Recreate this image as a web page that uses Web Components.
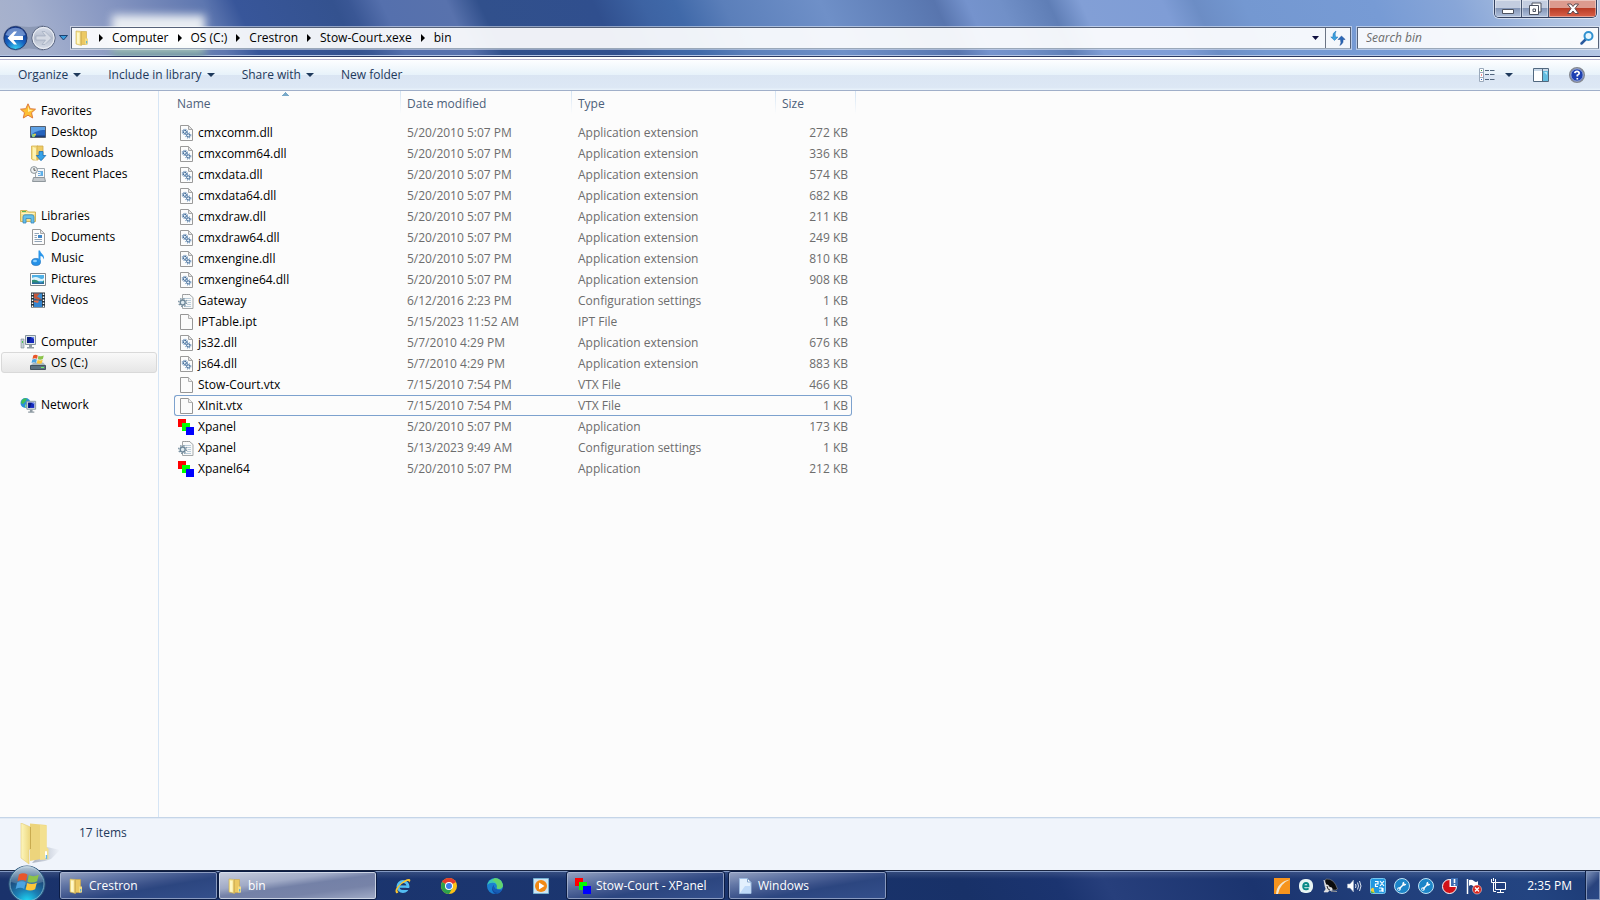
<!DOCTYPE html>
<html lang="en">
<head>
<meta charset="utf-8">
<title>bin</title>
<style>
  html, body{
    height: 100%;
    margin: 0;
  }
  body{
    font: 12px/20px "Open Sans", "Noto Sans", sans-serif;
    color: #000;
    background: #fcfcfc;
    overflow: hidden;
  }
</style>
</head>
<body>
<explorer-window>
  <title-bar slot="title"></title-bar>
  <tool-bar slot="toolbar"></tool-bar>
  <nav-pane slot="nav">
    <nav-item icon="star" root>Favorites</nav-item>
    <nav-item icon="desktop">Desktop</nav-item>
    <nav-item icon="downloads">Downloads</nav-item>
    <nav-item icon="recent" last>Recent Places</nav-item>
    <nav-item icon="libraries" root>Libraries</nav-item>
    <nav-item icon="documents">Documents</nav-item>
    <nav-item icon="music">Music</nav-item>
    <nav-item icon="pictures">Pictures</nav-item>
    <nav-item icon="videos" last>Videos</nav-item>
    <nav-item icon="computer" root>Computer</nav-item>
    <nav-item icon="drive" selected last>OS (C:)</nav-item>
    <nav-item icon="network" root>Network</nav-item>
  </nav-pane>
  <file-list slot="files"></file-list>
  <details-pane slot="details">17 items</details-pane>
  <task-bar slot="taskbar">
    <task-button slot="group" icon="folder">Crestron</task-button>
    <task-button slot="group" icon="folder" active>bin</task-button>
    <task-button slot="windows" icon="xpanel">Stow-Court - XPanel</task-button>
    <task-button slot="windows" icon="page">Windows</task-button>
  </task-bar>
</explorer-window>

<script>
const flag = `
  <path d="M1 3.2C3 2 5 2 7 3.2L6 7.8C4.200 6.800 2.200 6.800 0 7.900z" fill="#e8562a"/>
  <path d="M8 3.600C10 4.700 12.500 4.700 15 3.400L13.800 8C11.500 9.200 9 9 7 8.200z" fill="#8cc34a"/>
  <path d="M-.2 8.800C2 7.700 4 7.700 5.800 8.800L4.700 13.300C3 12.200 1 12.200-1.300 13.300z" fill="#4aa3e0"/>
  <path d="M6.800 9.200C9 10.100 11.300 10.100 13.600 9L12.400 13.500C10 14.700 7.600 14.500 5.700 13.700z" fill="#fcc63a"/>`

const sheet = `
  <path d="M2.500.5H10.500L14.500 4.500V15.500H2.500z" fill="#fcfcfc" stroke="#9a9a9a"/>
  <path d="M10.500.5V4.500H14.500z" fill="#e4e4e4" stroke="#a8a8a8"/>`

const wrench = `
  <circle cx="8" cy="8" r="7.500" fill="#1c85c8" stroke="#bfe2f5"/>
  <path d="M5 11L10 6" stroke="#fff" stroke-width="1.500" stroke-linecap="round"/>
  <path d="M12.300 5.500A2 2 0 1 1 10.500 3.700L9.800 5.200L10.800 6.200z" fill="#fff"/>
  <circle cx="5" cy="11" r="1.800" fill="#fff"/><circle cx="4.700" cy="11.300" r=".8" fill="#1c85c8"/>`

const monitor = `
  <path d="M5.500 1.500H15.500V10.500H5.500z" fill="#dfe6ea" stroke="#84939c"/>
  <path d="M7 3H14V9H7z" fill="#1529bd"/><path d="M7 3H11L9 9H7z" fill="#071a82"/><path d="M11 3H14V5z" fill="#6b8cf0"/>
  <path d="M9 11H12V13H14V14.500H7V13H9z" fill="#8f9ba3"/>`

const ICONS = {
  star: `<path d="M8 .8L10.200 5.700L15.500 6.200L11.500 9.700L12.700 15L8 12.200L3.300 15L4.500 9.700L.5 6.200L5.800 5.700z" fill="#fdbf33" stroke="#df7a3c"/>
    <path d="M8 3L9.300 6.700L13 7L8 9z" fill="#fff3a8"/>`,
  desktop: `<path d="M.5 2.500H15.500V13.500H.5z" fill="#2563bd" stroke="#56606e"/><path d="M1 3H15V6C9 6 4 8 1 11z" fill="#5fa2e6"/>
    <path d="M1 11.500H15V13H1z" fill="#1d3d77"/><circle cx="3.500" cy="11.500" r="1.800" fill="#8ed07e"/><circle cx="5" cy="10.500" r="1" fill="#f6c744"/>`,
  downloads: `<path d="M1.500 1H8V15H3L1.500 14z" fill="#f5df85" stroke="#d5b04e" stroke-width=".8"/><path d="M7 1H13V14H7z" fill="#eecb66" stroke="#d0aa49" stroke-width=".8"/>
    <path d="M3 2L6 3.500V15L3 14z" fill="#fff3b3"/>
    <path d="M9 6.500H13V10.500H15.800L11 15.700L6.300 10.500H9z" fill="#36a2e8" stroke="#1e6fb5" stroke-width=".8"/>`,
  recent: `<path d="M5.500 2.500H14.500V12H5.500z" fill="#f5f8fa" stroke="#a0a8ae"/><path d="M8 5.500H13M8 7.500H10M8 9.500H13" stroke="#6fa8d8"/>
    <path d="M10.500 6H13V9H10.500z" fill="#58b1ec"/><path d="M3.500 11.500H14.500L15.500 15.500H2.500z" fill="#c3c8cc" stroke="#8f979c"/>
    <circle cx="4" cy="4" r="3.400" fill="#edf0f1" stroke="#8b9499"/><path d="M4 2V4.300H5.700" stroke="#555" fill="none"/>`,
  libraries: `<path d="M.5 2.500H7L8.500 4H15.500V13.500H.5z" fill="#f5df8c" stroke="#d3b55c"/><path d="M2 3.500H6" stroke="#5db555"/>
    <path d="M1.500 5.500H14.500" stroke="#fff6c4"/>
    <path d="M3 15V9Q3 6.800 5 6.800H12Q14 6.800 14 9V15H11V10.500H6V15z" fill="#66bfe9" stroke="#3687ba" stroke-width=".8"/>`,
  documents: `${sheet}<path d="M4.500 4.500H9M4.500 6.500H7M4.500 8.500H7M4.500 10.500H12M4.500 12.500H12" stroke="#92a5b8"/><path d="M8 6H12V9H8z" fill="#3f86c7"/>`,
  music: `<ellipse cx="6" cy="12" rx="4.500" ry="3.600" fill="#2590e6" stroke="#1769b5" stroke-width=".6"/>
    <path d="M8.500 12V.5H10C10.500 3.500 14.500 4 14 9.500C13 7 12 6 10.500 6V12z" fill="#2a96ea"/><ellipse cx="5" cy="11" rx="2" ry="1.200" fill="#8dd0ff"/>`,
  pictures: `<path d="M.5 2.500H15.500V14.500H.5z" fill="#fdfdfd" stroke="#7f868b"/><path d="M2 4H14V13H2z" fill="#4fb0e6"/>
    <path d="M2 7Q6 5 9 7T14 7V10H2z" fill="#dcf3fa"/><path d="M2 9Q7 8 9 11T14 9V13H2z" fill="#2f8f78"/><path d="M2 11.500H14V13H2z" fill="#2b6ba0"/>`,
  videos: `<path d="M1 .5H15V15.500H1z" fill="#24303a"/><path d="M4 1.500H12V7.500H4z" fill="#3c8fd4"/><path d="M4 8.500H12V15H4z" fill="#3385d0"/>
    <path d="M4 1.500H10L7 4.500L12 7.500H7L4 6z" fill="#c4573a"/><path d="M4 8.500H9L8 11L4 10z" fill="#e06f4a"/>
    <path d="M2.500 1.500V15M13.500 1.500V15" stroke="#fff" stroke-width="1.500" stroke-dasharray="1.500 1.500"/>`,
  computer: `${monitor}<path d="M1 5H4V14H1z" fill="#c4cfd4" stroke="#7d8c94" stroke-width=".6"/><path d="M2 7H3V9H2z" fill="#4cc84f"/>`,
  drive: `<path d="M1 10L3.500 7.500H13L15.500 10V14.500H1z" fill="#a8b7bf"/><path d="M.5 10.500H15.500V14.500H.5z" fill="#5d7280" stroke="#45555f"/>
    <path d="M11 12H14V13H11z" fill="#6cf06c"/><g transform="translate(2.500 -2) scale(.75)">${flag}</g>`,
  network: `<circle cx="5.500" cy="6" r="5" fill="#2b8fd8"/><path d="M2 3Q5 0 7 2L5 5L3 7L1 6z" fill="#3fbf55"/><path d="M5 7L7 9L5 11z" fill="#7be08a"/>
    <g transform="translate(2 3) scale(.88)">${monitor}</g>`,
  folder: `<path d="M2 1L7.500 1.500V15.500L2 14z" fill="#f7e594" stroke="#cfae4d" stroke-width=".6"/><path d="M7.500 1.500H12.500V14.500H7.500z" fill="#ecc963" stroke="#cfa847" stroke-width=".6"/>
    <path d="M3 2.500L5.500 3V14L3 13.500z" fill="#fff8c8"/><path d="M6.800 2V15" stroke="#d9b85c"/><path d="M11 8.500H14V14.500H11z" fill="#f3dd86"/><path d="M12.700 11V13.500" stroke="#4ba7e0"/>`,
  dll: `${sheet}<g fill="none" stroke="#7196bd" stroke-dasharray="1 1.100" stroke-width="1.200"><circle cx="6.800" cy="6.800" r="2.600"/><circle cx="10.200" cy="10.400" r="2.600"/></g>
    <g fill="#e6f0fa" stroke="#3c6795"><circle cx="6.800" cy="6.800" r="1.600"/><circle cx="10.200" cy="10.400" r="1.600"/></g>`,
  ini: `<path d="M4.500 1.500H11.500L15 4.500V15.500H4.500z" fill="#f8f9f9" stroke="#a4a8aa"/><path d="M5 1.500H12" stroke="#999" stroke-dasharray="1 1"/>
    <path d="M6 5.500H13M9 7.500H13M10 9.500H13M9 11.500H13M6 13.500H13" stroke="#b9cbd8"/>
    <circle cx="4.700" cy="9.500" r="2.500" fill="#dfeaf0" stroke="#6d8799" stroke-width="1.400"/><circle cx="4.700" cy="9.500" r="4" fill="none" stroke="#6d8799" stroke-width="1.200" stroke-dasharray="1.400 1.740"/>`,
  file: `<path d="M2.500.5H10.500L14.500 4.500V15.500H2.500z" fill="#fbfbfb" stroke="#969696"/><path d="M10.500.5V4.500H14.500" fill="#eee" stroke="#b0b0b0"/>`,
  xpanel: `<path d="M0 0H8V8H0z" fill="#f00"/><path d="M4 4H12V12H4z" fill="#0f0"/><path d="M8 8H16V16H8z" fill="#00f"/>`,
  page: `<path d="M2.500.5H10.500L14 4V15.500H2.500z" fill="#e3f0fd" stroke="#9dbbe0"/><path d="M8 8H13.500V15H3z" fill="#c0daf8"/><path d="M10.500.5V4H14z" fill="#fff" stroke="#89a9cf"/>`,
  refresh: `<path d="M6 1Q2 3 3 7H.8L4.500 10.500L8 7H5.500Q4.500 4 6 1z" fill="#3aa0de" stroke="#2370b5" stroke-width=".5"/><path d="M10 15.500Q14 13 13 9.500H15.200L11.500 6L8 9.500H10.500Q11.500 12.500 10 15.500z" fill="#2a68b8" stroke="#204c92" stroke-width=".5"/>`,
  magnifier: `<path d="M2.500 13.500L7 9" stroke="#28599e" stroke-width="2.500" stroke-linecap="round"/><circle cx="9.500" cy="6" r="4" fill="#e8f7ff" stroke="#3191d0" stroke-width="2"/>`,
  views: `<path d="M.5 1.500H4.500V14.500H.5zM.5 5.500H4.500M.5 10.500H4.500" fill="#fff" stroke="#9aa9bb"/><path d="M2 3H3V4H2z" fill="#3a9b40"/><path d="M2 7.500H3V8.500H2z" fill="#e02020"/><path d="M2 12H3V13H2z" fill="#2268d0"/>
    <path d="M6 3.500H10M11 3.500H15.500M6 7.500H10M11 7.500H15.500M6 12.500H10M11 12.500H15.500" stroke="#52677e"/>`,
  preview: `<path d="M.5 1.500H15.500V14.500H.5z" fill="#fff" stroke="#51687f"/><path d="M1 2H15V4H1z" fill="#c9d9e9"/><path d="M10 4H15V14H10z" fill="#64bde0"/><path d="M9.500 2V14.500" stroke="#51687f"/><path d="M11 5L14 8V5z" fill="#b9e7f7"/>`,
  help: `<circle cx="8" cy="8" r="7.300" fill="#1b3fb2" stroke="#85898f" stroke-width="1.400"/><circle cx="8" cy="8" r="6.200" fill="none" stroke="#ccd2dd" stroke-width=".8"/>
    <path d="M5.800 6.200Q6 4.300 8 4.300T10.200 6.200Q10.200 7.300 8.300 8.300V9.500M8.300 11V12.500" fill="none" stroke="#fff" stroke-width="1.700"/>`,
  ie: `<circle cx="8" cy="8.500" r="5" fill="none" stroke="#53bdf2" stroke-width="3"/><path d="M4 8.600H13" stroke="#53bdf2" stroke-width="2.400"/><path d="M9 10H15V12H9z" fill="#1c356f"/>
    <path d="M1 15Q-1.500 12 5 6T15 1.200Q16 2 14.500 4.500Q14.700 2.500 12 3Q7 5 4 9T3.500 14Q2 16 1 15z" fill="#fbc42e"/>`,
  chrome: `<circle cx="8" cy="8" r="8" fill="#fbc116"/><path d="M8 8L1.100 4A8 8 0 0 1 14.900 4z" fill="#e33b2e"/><path d="M8 8L1.100 4A8 8 0 0 0 8 16L11.500 10z" fill="#2da24c"/>
    <circle cx="8" cy="8" r="4" fill="#fff"/><circle cx="8" cy="8" r="3" fill="#3b7ded"/>`,
  edge: `<circle cx="8" cy="8" r="8" fill="#1b7fd0"/><path d="M.2 7A8 8 0 0 1 15.900 7Q16 11 11.500 11Q9 10.500 10 9Q10.500 6 7.500 5Q3 4 .2 7z" fill="#3dc7b0"/>
    <path d="M8 0A8 8 0 0 1 15.900 7Q16 11 11.500 11Q9 10.500 10 9Q10 4 5 2z" fill="#63d36e"/><path d="M6.500 7Q3 12 8 16A8 8 0 0 0 14.500 12Q7 13 6.500 7z" fill="#12479e"/><path d="M7 7Q6 12 13 12Q16 11 14 13.500L12 15Q3 14 7 7z" fill="#175db5"/>`,
  player: `<path d="M.5.500H15.500V15.500H.5z" fill="#cfe5f2" stroke="#75b1d3"/><circle cx="8" cy="8" r="6" fill="#f28913"/><path d="M6 4.500L11.500 8L6 11.500z" fill="#fff"/>`,
  orange: `<path d="M0 0H16V16H0z" fill="#f7941d"/><path d="M2 16Q3 4 16 1.500Q6 5.500 4 16z" fill="#f2e6cf"/>`,
  eset: `<rect x="1" y="1" width="14" height="14" rx="6" fill="#e8f5f4"/><path d="M5.300 8.300H10.500Q10.500 5 8 5T5.200 8.200T8.200 11.300Q9.700 11.300 10.500 10.400" fill="none" stroke="#078a87" stroke-width="1.900"/>`,
  dish: `<path d="M4 1Q12 0 15.500 11Q12 14 6 9Q1 4 4 1z" fill="#0c0c0c" stroke="#8a8a8a" stroke-width=".6"/><path d="M2 2L4 7L6 7L7 9L10 10L10 13L7 12L6 14H2L4 11L3 8z" fill="#ddd" stroke="#f2f2f2" stroke-width=".6"/><path d="M5 8L6 11L8 12" stroke="#333"/><path d="M9 13L15 13.500" stroke="#999"/>`,
  speaker: `<path d="M1.500 6H4L7.500 2V14L4 10H1.500z" fill="#fff" stroke="#a4b2ca" stroke-width=".6"/><path d="M9.500 6Q10.500 8 9.500 10M11.500 4.500Q13.500 8 11.500 11.500M13.500 3Q16.500 8 13.500 13" fill="none" stroke="#dbe4f0"/>`,
  tiles: `<rect x=".5" y=".5" width="15" height="15" rx="2" fill="#2097e0" stroke="#78c6ee"/><path d="M5 3.500H8V6H5.500V8.500H8M10 3L14 8M14 3L10 8M9 10H12V13H9M13 10V14" fill="none" stroke="#fff" stroke-width="1.200"/>
    <path d="M1 11Q4 8 4 12T8 15H1z" fill="#f6ce38"/><path d="M1 13L5 15H1z" fill="#4fb84f"/>`,
  wrench,
  pie: `<circle cx="7.500" cy="8.500" r="7" fill="#d01218" stroke="#fff"/><path d="M7.500 1V9H14.500V1z" fill="#fff"/><path d="M9 0H16V8H9z" fill="#3c6eb3"/><path d="M12.500 1V5M12.500 6V7.500" stroke="#fff" stroke-width="1.600"/>`,
  action: `<path d="M1.500 1V16" stroke="#fff" stroke-width="1.500"/><path d="M3 2Q6 1 8 3T12 3V9Q9 10 7 8T3 8z" fill="#fff"/><circle cx="11" cy="11.500" r="4.500" fill="#d9261c" stroke="#fff" stroke-width=".5"/><path d="M9 9.500L13 13.500M13 9.500L9 13.500" stroke="#fff" stroke-width="1.400"/>`,
  lan: `<path d="M5.500 4.500H15.500V11.500H5.500z" fill="#203f7c" stroke="#fff"/><path d="M7 14.500H14M10.500 12V14" stroke="#fff"/><path d="M1.500 1V4.500H5.500V1M3.500 4.500V13.500H6M3.500 0V3" fill="none" stroke="#fff"/>`,
}

class AeroIcon extends HTMLElement{
  connectedCallback(){
    if (!this.shadowRoot) this.attachShadow({mode: 'open'})
    this.shadowRoot.innerHTML = `
      <style>
        :host{
          display: block;
          flex: none;
          width: 16px;
          height: 16px;
        }
        svg{
          display: block;
          width: 100%;
          height: 100%;
          overflow: visible;
        }
      </style>
      <svg viewBox="0 0 16 16" fill="none" aria-hidden="true">${ICONS[this.getAttribute('name')] || ''}</svg>
    `
  }
}
customElements.define('aero-icon', AeroIcon)

class ExplorerWindow extends HTMLElement{
  constructor(){
    super()
    this.attachShadow({mode: 'open'}).innerHTML = `
      <style>
        :host{
          display: flex;
          flex-direction: column;
          height: 100vh;
        }
        .body{
          display: flex;
          flex: 1;
          min-height: 0;
        }
        ::slotted([slot=nav]){
          flex: none;
        }
        ::slotted([slot=files]){
          flex: 1;
          min-width: 0;
        }
      </style>
      <slot name="title"></slot>
      <slot name="toolbar"></slot>
      <div class="body">
        <slot name="nav"></slot>
        <slot name="files"></slot>
      </div>
      <slot name="details"></slot>
      <slot name="taskbar"></slot>
    `
  }
}
customElements.define('explorer-window', ExplorerWindow)

class TitleBar extends HTMLElement{
  constructor(){
    super()
    const crumbs = ['Computer', 'OS (C:)', 'Crestron', 'Stow-Court.xexe', 'bin']
    this.attachShadow({mode: 'open'}).innerHTML = `
      <style>
        :host{
          display: flex;
          flex-direction: column;
          position: relative;
          box-sizing: border-box;
          height: 57px;
          overflow: hidden;
          border-bottom: 1px solid #2a3860;
          box-shadow: inset 0 -1px #b5c6e6;
          background: linear-gradient(65deg, #a9b3cc 0, #a3afcd 3%, #8797c2 8%, #6c81b5 12%, #5e77b0 14%, #38569a 16%, #34528f 22%,
            #3a5795 23%, #5570ad 25%, #5872ad 29%, #31508c 31%, #304f8e 38%, #3d63a3 41%, #4069a9 43%, #5b7fba 46%, #6f90c8 52%, #5e7db6 57%,
            #5875ae 59%, #7593cd 61%, #7190c8 63%, #5f7eb6 66%, #829fd6 68%, #7f9dd6 73%, #6c8dc5 75%, #7498d1 78%, #779bd5 86%, #88a6d8 91%, #aabfe0 96%, #b9cae6 100%);
        }
        .glow{
          position: absolute;
          left: 112px;
          top: 15px;
          width: 93px;
          height: 42px;
          background: linear-gradient(#e9edf2 70%, #78a09d 85%);
          filter: blur(4px);
        }
        button{
          display: flex;
          align-items: center;
          justify-content: center;
          margin: 0;
          padding: 0;
          border: 0;
          background: none;
          font: inherit;
          color: inherit;
        }
        svg{
          display: block;
        }
        .controls{
          display: flex;
          position: relative;
          align-self: flex-end;
          box-sizing: border-box;
          height: 18px;
          margin-right: 3px;
          border: 1px solid #34415f;
          border-top: 0;
          border-radius: 0 0 5px 5px;
          box-shadow: 0 0 0 1px #ffffff88;
          overflow: hidden;
        }
        .controls button{
          width: 27px;
          border-right: 1px solid #45546f;
          background: linear-gradient(#c3cde0 45%, #8496b7 50%, #b1c1dc);
          box-shadow: inset 0 0 0 1px #ffffff66;
        }
        .controls button.close{
          width: 47px;
          border-right: 0;
          background: linear-gradient(#dc9a8e 45%, #b93c26 50%, #d9624a);
        }
        .bar{
          display: flex;
          align-items: center;
          position: relative;
          margin-top: 6px;
          height: 28px;
          padding: 0 1px 0 2px;
        }
        .travel{
          display: flex;
          align-items: center;
          width: 69px;
        }
        .address, .search{
          display: flex;
          align-items: stretch;
          box-sizing: border-box;
          height: 22px;
          border: 1px solid #566279;
          border-bottom-color: #9aa8b9;
          background: #ffffffea;
          box-shadow: 0 0 0 1px #ffffff77;
        }
        .address{
          flex: 1;
          min-width: 0;
        }
        .address aero-icon{
          margin: 2px 0 0 2px;
        }
        .crumb::before{
          content: "";
          border: 4px solid transparent;
          border-left: 4px solid #000;
          border-right: 0;
          margin: 0 9px;
        }
        .drop{
          width: 20px;
          margin-left: auto;
        }
        .reload{
          width: 25px;
          border-left: 1px solid #6b7485;
        }
        .address .reload aero-icon{
          margin: 0;
        }
        .search{
          align-items: center;
          width: 242px;
          margin-left: 6px;
          padding: 0 3px 0 8px;
        }
        input{
          flex: 1;
          min-width: 0;
          padding: 0;
          border: 0;
          outline: 0;
          background: none;
          font: inherit;
          font-style: italic;
        }
        input::placeholder{
          color: #6d6d6d;
          opacity: 1;
        }
      </style>
      <div class="glow"></div>
      <div class="controls">
        <button aria-label="Minimize"><svg width="14" height="14"><path d="M1.500 7.500H12.500V11.500H1.500z" fill="#fff" stroke="#4d5361"/></svg></button>
        <button aria-label="Restore"><svg width="14" height="14"><path d="M4 1H13V10H4z" fill="#fff" stroke="#4d5361"/><path d="M1.500 3.500H10.500V12.500H1.500zM5 7V9.500H7.500V7z" fill="#fff" fill-rule="evenodd" stroke="#4d5361"/></svg></button>
        <button class="close" aria-label="Close"><svg width="14" height="14"><path d="M1.500 2H5L7 4.500L9 2H12.500L9 6.500L12.500 11.500H9L7 9L5 11.500H1.500L5 6.500z" fill="#fff" stroke="#5d4a50"/></svg></button>
      </div>
      <div class="bar">
        <div class="travel">
          <button aria-label="Back and forward"><svg width="54" height="28" viewBox="0 0 54 28">
            <defs>
              <radialGradient id="b" cx=".5" cy="1" r=".9"><stop offset="0" stop-color="#35d5f5"/><stop offset=".5" stop-color="#1762c0"/><stop offset="1" stop-color="#12358c"/></radialGradient>
              <linearGradient id="f" x2="0" y2="1"><stop offset="0" stop-color="#d9dfeb"/><stop offset=".5" stop-color="#b5bdcd"/><stop offset="1" stop-color="#d8dee9"/></linearGradient>
            </defs>
            <path d="M13 1Q27 5 41 1V27Q27 22 13 27z" fill="#8c99b5"/>
            <circle cx="13.500" cy="14" r="12.500" fill="#8b98b4"/><circle cx="13.500" cy="14" r="11.500" fill="url(#b)" stroke="#223a70"/>
            <path d="M3.500 11A10.500 10.500 0 0 1 23.500 11Q13 15 3.500 11z" fill="#a2c0ec" opacity=".6"/>
            <path d="M5.500 14L12 7.500H15L11.500 12H21V16H11.500L15 20.500H12z" fill="#fff"/>
            <circle cx="41.500" cy="14" r="11.700" fill="url(#f)" stroke="#5c6883"/><circle cx="41.500" cy="14" r="10.500" fill="none" stroke="#eef1f7"/>
            <path d="M49.500 14L43 7.500H40L43.500 12H34V16H43.500L40 20.500H43z" fill="#d5dae4" stroke="#9ba6ba" stroke-width=".6"/>
          </svg></button>
          <button aria-label="Recent pages"><svg width="14" height="8"><path d="M3.500 1.500H11.500L7.500 6z" fill="#3b9bdb" stroke="#1c4373"/></svg></button>
        </div>
        <div class="address">
          <aero-icon name="folder"></aero-icon>
          ${crumbs.map(item => `<button class="crumb">${item}</button>`).join('')}
          <button class="drop" aria-label="Previous locations"><svg width="7" height="4"><path d="M0 0H7L3.500 4z" fill="#101040"/></svg></button>
          <button class="reload" aria-label="Refresh"><aero-icon name="refresh"></aero-icon></button>
        </div>
        <div class="search">
          <input type="text" placeholder="Search bin" aria-label="Search bin">
          <aero-icon name="magnifier"></aero-icon>
        </div>
      </div>
    `
  }
}
customElements.define('title-bar', TitleBar)

class ToolBar extends HTMLElement{
  constructor(){
    super()
    const caret = '<svg width="8" height="4" aria-hidden="true"><path d="M0 0H8L4 4z" fill="#1e395b"/></svg>'
    this.attachShadow({mode: 'open'}).innerHTML = `
      <style>
        :host{
          display: flex;
          align-items: center;
          box-sizing: border-box;
          height: 34px;
          padding: 3px 15px 0 18px;
          border-bottom: 1px solid #a0afc9;
          background: linear-gradient(#fff 2px, #b6b4cf 2px, #b6b4cf 3px, #fdfeff 3px, #e7f2fa 18px, #dae5f3 18px, #dde8f5 31px, #e7f1fa 32px);
          color: #1e395b;
        }
        button{
          display: flex;
          align-items: center;
          gap: 5px;
          margin: 0 27px 0 0;
          padding: 0;
          border: 0;
          background: none;
          font: inherit;
          color: inherit;
        }
        .right{
          display: flex;
          margin-left: auto;
        }
        .right button{
          margin: 0 0 0 20px;
        }
        .right button:first-child{
          gap: 10px;
          margin: 0;
        }
      </style>
      <button>Organize ${caret}</button>
      <button>Include in library ${caret}</button>
      <button>Share with ${caret}</button>
      <button>New folder</button>
      <div class="right">
        <button aria-label="Change your view"><aero-icon name="views"></aero-icon>${caret}</button>
        <button aria-label="Preview pane"><aero-icon name="preview"></aero-icon></button>
        <button aria-label="Help"><aero-icon name="help"></aero-icon></button>
      </div>
    `
  }
}
customElements.define('tool-bar', ToolBar)

class NavPane extends HTMLElement{
  constructor(){
    super()
    this.attachShadow({mode: 'open'}).innerHTML = `
      <style>
        :host{
          display: block;
          box-sizing: border-box;
          width: 159px;
          padding: 9px 1px;
          border-right: 1px solid #d6e5f5;
        }
      </style>
      <nav><slot></slot></nav>
    `
  }
}
customElements.define('nav-pane', NavPane)

class NavItem extends HTMLElement{
  connectedCallback(){
    if (!this.shadowRoot) this.attachShadow({mode: 'open'})
    this.shadowRoot.innerHTML = `
      <style>
        :host{
          display: block;
        }
        :host([last]){
          margin-bottom: 21px;
        }
        a{
          display: flex;
          align-items: center;
          gap: 5px;
          box-sizing: border-box;
          height: 21px;
          padding-left: 28px;
          border: 1px solid transparent;
          border-radius: 3px;
          color: inherit;
          text-decoration: none;
          white-space: nowrap;
        }
        :host([root]) a{
          padding-left: 18px;
        }
        :host([selected]) a{
          border-color: #d9d9d9;
          background: linear-gradient(#f9f9f9, #e6e6e6);
        }
      </style>
      <a href="#"><aero-icon name="${this.getAttribute('icon')}"></aero-icon><slot></slot></a>
    `
  }
}
customElements.define('nav-item', NavItem)

class FileList extends HTMLElement{
  constructor(){
    super()
    this.attachShadow({mode: 'open'}).innerHTML = `
      <style>
        :host{
          display: block;
          padding-left: 15px;
        }
        table{
          table-layout: fixed;
          width: 682px;
          border-spacing: 0;
        }
        th{
          height: 31px;
          padding: 0 0 5px 6px;
          box-sizing: border-box;
          font-weight: normal;
          text-align: left;
          color: #4c607a;
          background: linear-gradient(#d3e3f3, #fcfcfc) right top / 1px 23px no-repeat;
        }
        th:first-child{
          padding-left: 3px;
          background: linear-gradient(#d3e3f3, #fcfcfc) right top / 1px 23px no-repeat,
            conic-gradient(from 135deg at 50% 0, #79a9c9 90deg, transparent 0) 108px 1px / 7px 4px no-repeat;
        }
        th:nth-child(4){
          background: none;
        }
        td{
          box-sizing: border-box;
          height: 21px;
          padding: 0 6px;
          border: 0 solid transparent;
          border-width: 1px 0;
          line-height: 19px;
          color: #6d6d6d;
          white-space: nowrap;
        }
        td:first-child{
          padding: 0 0 0 3px;
          border-left-width: 1px;
          color: #000;
        }
        td:nth-child(4){
          padding: 0 3px;
          border-right-width: 1px;
          text-align: right;
        }
        tr.focus td{
          border-color: #7da2ce;
        }
        tr.focus td:first-child{
          border-radius: 3px 0 0 3px;
        }
        tr.focus td:nth-child(4){
          border-radius: 0 3px 3px 0;
        }
        tr.focus td:last-child{
          border-color: transparent;
        }
        .name{
          display: flex;
          align-items: center;
          gap: 4px;
        }
      </style>
      <table>
        <colgroup><col style="width: 227px"><col style="width: 171px"><col style="width: 204px"><col style="width: 76px"><col></colgroup>
        <thead><tr><th>Name</th><th>Date modified</th><th>Type</th><th>Size</th><th></th></tr></thead>
        <tbody></tbody>
      </table>
    `
  }
  /**
   * @param data {array} rows of [icon, name, date, type, size]
   */
  set data(data){
    const rows = data.map(([icon, ...cells]) => {
      const row = document.createElement('tr')
      row.innerHTML = cells.map((item, i) => i ? `<td>${item}</td>` : `<td><span class="name"><aero-icon name="${icon}"></aero-icon>${item}</span></td>`).join('')
      row.classList.toggle('focus', cells[0] === 'XInit.vtx')
      row.append(document.createElement('td'))
      return row
    })
    this.shadowRoot.querySelector('tbody').replaceChildren(...rows)
  }
}
customElements.define('file-list', FileList)

class DetailsPane extends HTMLElement{
  constructor(){
    super()
    this.attachShadow({mode: 'open'}).innerHTML = `
      <style>
        :host{
          display: flex;
          box-sizing: border-box;
          height: 53px;
          padding: 5px 18px 0;
          border-top: 1px solid #c5d5e8;
          box-shadow: inset 0 1px #e2ebf6;
          background: #f0f4fb;
          color: #1e395b;
        }
        svg{
          flex: none;
          margin-right: 17px;
        }
      </style>
      <svg width="44" height="44" viewBox="0 1 44 44" aria-hidden="true">
        <defs>
          <linearGradient id="a" x2="1"><stop offset="0" stop-color="#fdf6bd"/><stop offset="1" stop-color="#ecd67b"/></linearGradient>
          <linearGradient id="s" x2="1"><stop offset="0" stop-color="#8a93a5"/><stop offset="1" stop-color="#8a93a500"/></linearGradient>
        </defs>
        <path d="M14 41L29 25L42 28L33 37L27 39z" fill="url(#s)" opacity=".7"/>
        <path d="M12 1.500L28.500 3V36L12 39z" fill="#ecd47c"/>
        <path d="M22 3L28.500 3.500V25L30.500 27V37L22 38z" fill="#f3e08f"/>
        <path d="M3 1L12.500 5V26L11 28V42L3 36z" fill="url(#a)" stroke="#e3cb78" stroke-width=".6"/>
        <path d="M12.500 5V27" stroke="#c9ab50"/><path d="M28 30V35" stroke="#fff" stroke-width="2" stroke-linecap="round"/><path d="M28.500 33V37" stroke="#63b5ea" stroke-width="1.500"/>
      </svg>
      <slot></slot>
    `
  }
}
customElements.define('details-pane', DetailsPane)

class TaskButton extends HTMLElement{
  connectedCallback(){
    if (!this.shadowRoot) this.attachShadow({mode: 'open'})
    this.shadowRoot.innerHTML = `
      <style>
        :host{
          display: block;
        }
        button{
          display: flex;
          align-items: center;
          gap: 5px;
          box-sizing: border-box;
          width: 159px;
          height: 29px;
          margin: 0;
          padding: 0 8px;
          border: 1px solid #0b1c44;
          border-radius: 3px;
          box-shadow: inset 0 0 0 1px #b6c2dbaa;
          background: linear-gradient(170deg, #98a4c2 0, #6377a6 25%, #3a5189 50%, #2c4680 60%, #35508c);
          font: inherit;
          color: #fff;
          white-space: nowrap;
        }
        :host([active]) button{
          box-shadow: inset 0 0 0 1px #dbe2efcc;
          background: linear-gradient(172deg, #c9cfde 0, #a0aac6 35%, #7481a7 50%, #7783a8 70%, #a2adc8);
        }
      </style>
      <button><aero-icon name="${this.getAttribute('icon')}"></aero-icon><slot></slot></button>
    `
  }
}
customElements.define('task-button', TaskButton)

class TaskBar extends HTMLElement{
  constructor(){
    super()
    const pinned = {ie: 'Internet Explorer', chrome: 'Chrome', edge: 'Edge', player: 'Media Player'}
    const tray = ['orange', 'eset', 'dish', 'speaker', 'tiles', 'wrench', 'wrench', 'pie', 'action', 'lan']
    this.attachShadow({mode: 'open'}).innerHTML = `
      <style>
        :host{
          display: flex;
          align-items: center;
          position: relative;
          box-sizing: border-box;
          height: 30px;
          border-top: 1px solid #17233f;
          box-shadow: inset 0 1px #8298c2;
          background: linear-gradient(#ffffff22, transparent 8px),
            linear-gradient(60deg, #1a326b 0, #1b3670 40%, #183168 60%, #1b3470 66%, #273f7c 69%, #1b346f 78%, #213f7b 86%, #234481 95%, #1c3a75);
          color: #fff;
        }
        button{
          display: flex;
          align-items: center;
          justify-content: center;
          margin: 0;
          padding: 0;
          border: 0;
          background: none;
        }
        .start{
          align-self: flex-end;
          width: 59px;
          padding-right: 5px;
          box-sizing: border-box;
        }
        svg{
          display: block;
        }
        .group, .windows{
          display: flex;
        }
        .windows{
          gap: 3px;
        }
        .pinned{
          display: flex;
          padding: 0 2px 0 3px;
        }
        .pinned button{
          width: 46px;
          height: 29px;
        }
        .tray{
          display: flex;
          gap: 8px;
          margin-left: auto;
        }
        time{
          margin: 0 14px 0 21px;
        }
        .peek{
          width: 14px;
          height: 29px;
          border: 1px solid #7f92b8;
          box-shadow: -1px 0 #0f2147;
          background: linear-gradient(135deg, #7c90b8, #29437d 50%, #2b4986);
        }
      </style>
      <button class="start" aria-label="Start"><svg width="38" height="35" viewBox="0 0 38 35">
        <defs>
          <radialGradient id="o" cx=".5" cy="1" r="1"><stop offset="0" stop-color="#1fe0fb"/><stop offset=".35" stop-color="#1c7fb4"/><stop offset=".7" stop-color="#1c4a7c"/><stop offset="1" stop-color="#41668c"/></radialGradient>
          <linearGradient id="g" x2="0" y2="1"><stop offset="0" stop-color="#d5e1ea" stop-opacity=".85"/><stop offset="1" stop-color="#9db9cd" stop-opacity=".2"/></linearGradient>
        </defs>
        <circle cx="19" cy="19" r="18" fill="url(#o)" stroke="#2e587d"/><circle cx="19" cy="19" r="17" fill="none" stroke="#8bbad0" opacity=".8"/>
        <path d="M3 17A16 16 0 0 1 35 17Q19 23 3 17z" fill="url(#g)"/>
        <g transform="translate(9.500 5) scale(1.420)">${flag}</g>
      </svg></button>
      <div class="group"><slot name="group"></slot></div>
      <div class="pinned">${Object.keys(pinned).map(key => `<button aria-label="${pinned[key]}"><aero-icon name="${key}"></aero-icon></button>`).join('')}</div>
      <div class="windows"><slot name="windows"></slot></div>
      <div class="tray">${tray.map(item => `<aero-icon name="${item}"></aero-icon>`).join('')}</div>
      <time>2:35 PM</time>
      <button class="peek" aria-label="Show desktop"></button>
    `
  }
}
customElements.define('task-bar', TaskBar)

const EXT = 'Application extension'
const INI = 'Configuration settings'
document.querySelector('file-list').data = [
  ['dll', 'cmxcomm.dll', '5/20/2010 5:07 PM', EXT, '272 KB'],
  ['dll', 'cmxcomm64.dll', '5/20/2010 5:07 PM', EXT, '336 KB'],
  ['dll', 'cmxdata.dll', '5/20/2010 5:07 PM', EXT, '574 KB'],
  ['dll', 'cmxdata64.dll', '5/20/2010 5:07 PM', EXT, '682 KB'],
  ['dll', 'cmxdraw.dll', '5/20/2010 5:07 PM', EXT, '211 KB'],
  ['dll', 'cmxdraw64.dll', '5/20/2010 5:07 PM', EXT, '249 KB'],
  ['dll', 'cmxengine.dll', '5/20/2010 5:07 PM', EXT, '810 KB'],
  ['dll', 'cmxengine64.dll', '5/20/2010 5:07 PM', EXT, '908 KB'],
  ['ini', 'Gateway', '6/12/2016 2:23 PM', INI, '1 KB'],
  ['file', 'IPTable.ipt', '5/15/2023 11:52 AM', 'IPT File', '1 KB'],
  ['dll', 'js32.dll', '5/7/2010 4:29 PM', EXT, '676 KB'],
  ['dll', 'js64.dll', '5/7/2010 4:29 PM', EXT, '883 KB'],
  ['file', 'Stow-Court.vtx', '7/15/2010 7:54 PM', 'VTX File', '466 KB'],
  ['file', 'XInit.vtx', '7/15/2010 7:54 PM', 'VTX File', '1 KB'],
  ['xpanel', 'Xpanel', '5/20/2010 5:07 PM', 'Application', '173 KB'],
  ['ini', 'Xpanel', '5/13/2023 9:49 AM', INI, '1 KB'],
  ['xpanel', 'Xpanel64', '5/20/2010 5:07 PM', 'Application', '212 KB'],
]
</script>
</body>
</html>
